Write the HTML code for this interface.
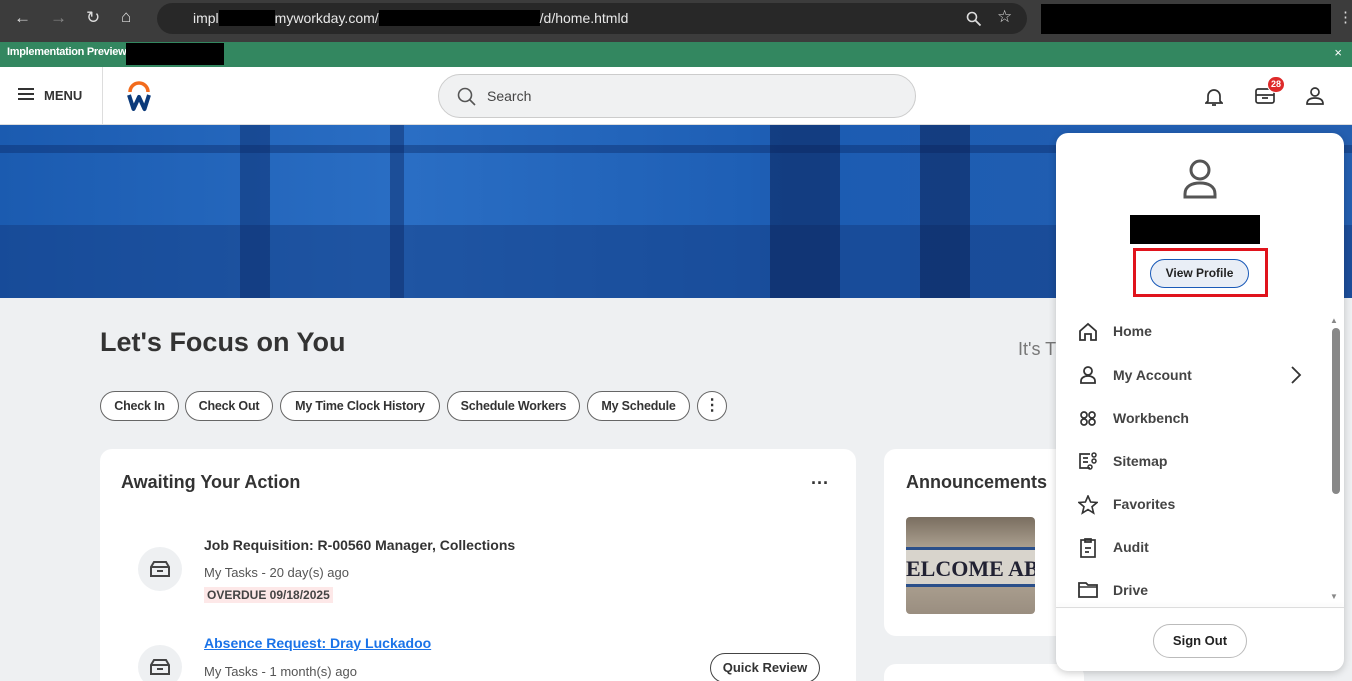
<!DOCTYPE html>
<html><head><style>
*{box-sizing:border-box;margin:0;padding:0}
html,body{width:1352px;height:681px;overflow:hidden}
body{background:#eef0f2;font-family:"Liberation Sans",sans-serif;position:relative;color:#333}
.abs{position:absolute}
.chrome{left:0;top:0;width:1352px;height:38px;background:#3c3c3c}
.url{left:157px;top:3px;width:870px;height:31px;border-radius:16px;background:#282828;color:#e8e8e8;font-size:14px;line-height:31px;padding-left:36px}
.green{left:0;top:38px;width:1352px;height:29px;background:#338760;border-top:4px solid #3c3c3c}
.hdr{left:0;top:67px;width:1352px;height:58px;background:#fff;border-bottom:1px solid #ddd}
.banner{left:0;top:125px;width:1352px;height:173px;background:linear-gradient(90deg,#1b5bb0,#2a6ec4 30%,#1c5cb2 60%,#245fb0);overflow:hidden}
.pill{position:absolute;top:391px;height:30px;border:1px solid #666;border-radius:15px;background:#fff;font-size:12.5px;font-weight:bold;line-height:28px;text-align:center;color:#333;white-space:nowrap;letter-spacing:-.2px}
.card{background:#fff;border-radius:12px;position:absolute}
.menu div.it{position:absolute;left:57px;font-size:14px;font-weight:bold;color:#444}
.menu svg{position:absolute;left:22px}
</style></head><body>
<div class="abs chrome">
<span class="abs" style="left:14px;top:8px;color:#ddd;font-size:17px">←</span>
<span class="abs" style="left:50px;top:8px;color:#888;font-size:17px">→</span>
<span class="abs" style="left:86px;top:8px;color:#ddd;font-size:17px">↻</span>
<span class="abs" style="left:121px;top:7px;color:#ddd;font-size:17px">⌂</span>
<div class="abs url">impl<span style="background:#000;color:#000">xxxxxxxx</span>myworkday.com/<span style="background:#000;color:#000">xxxxxxxxxxxxxxxxxxxxxxx</span>/d/home.htmld</div>
<svg class="abs" style="left:966px;top:11px" width="16" height="16"><circle cx="6" cy="6" r="4.5" stroke="#ddd" stroke-width="1.6" fill="none"/><path d="M9.5 9.5l5 5" stroke="#ddd" stroke-width="1.8"/></svg>
<span class="abs" style="left:997px;top:7px;color:#ddd;font-size:17px">☆</span>
<div class="abs" style="left:1041px;top:4px;width:290px;height:30px;background:#000"></div>
<span class="abs" style="left:1338px;top:8px;color:#ddd;font-size:15px">⋮</span>
</div>
<div class="abs green"><span class="abs" style="left:7px;top:4px;color:#fff;font-size:11px;font-weight:bold;letter-spacing:-.3px">Implementation Preview</span><div class="abs" style="left:126px;top:1px;width:98px;height:22px;background:#000"></div><span class="abs" style="right:10px;top:3px;color:#fff;font-size:13px">×</span></div>
<div class="abs hdr">
<div class="abs" style="left:18px;top:21px;width:16px;height:2px;background:#333;box-shadow:0 5px #333,0 10px #333"></div>
<span class="abs" style="left:44px;top:21px;font-size:13px;font-weight:bold;color:#333">MENU</span>
<div class="abs" style="left:102px;top:0;width:1px;height:58px;background:#ddd"></div>
<svg class="abs" style="left:126px;top:14px" width="26" height="32"><path d="M4 11 A9 9 0 0 1 22 11" stroke="#f26b1d" stroke-width="3.5" fill="none"/><path d="M3 14l4.5 14 5.5-12 5.5 12 4.5-14" stroke="#0b3a7a" stroke-width="4" fill="none" stroke-linejoin="round"/></svg>
<div class="abs" style="left:438px;top:7px;width:478px;height:44px;border-radius:22px;background:#f0f1f2;border:1px solid #ccc"><svg class="abs" style="left:18px;top:12px" width="20" height="20"><circle cx="8" cy="8" r="6.5" stroke="#555" stroke-width="1.6" fill="none"/><path d="M13 13l5 5" stroke="#555" stroke-width="1.6"/></svg><span class="abs" style="left:48px;top:13px;font-size:14px;color:#444">Search</span></div>
<svg class="abs" style="left:1205px;top:20px" width="18" height="20"><path d="M3 14V9a6 6 0 0 1 12 0v5l2 2H1z M7 18h4" stroke="#333" stroke-width="1.7" fill="none"/></svg>
<svg class="abs" style="left:1255px;top:21px" width="20" height="16"><rect x="1" y="1" width="18" height="14" rx="2" stroke="#333" stroke-width="1.7" fill="none"/><path d="M1 7h18M7 10h6" stroke="#333" stroke-width="1.7"/></svg>
<div class="abs" style="left:1267px;top:9px;width:18px;height:17px;border-radius:9px;background:#de2a2a;color:#fff;font-size:9px;font-weight:bold;text-align:center;line-height:15px;border:1px solid #fff">28</div>
<svg class="abs" style="left:1306px;top:20px" width="18" height="18"><circle cx="9" cy="5" r="4" stroke="#333" stroke-width="1.7" fill="none"/><path d="M1 17c0-5 4-6 8-6s8 1 8 6z" stroke="#333" stroke-width="1.7" fill="none"/></svg>
</div>
<div class="abs banner">
<div class="abs" style="left:0;top:100px;width:1352px;height:73px;background:rgba(20,60,130,.5)"></div>
<div class="abs" style="left:240px;top:0;width:30px;height:173px;background:rgba(10,40,100,.45)"></div>
<div class="abs" style="left:390px;top:0;width:14px;height:173px;background:rgba(10,40,100,.45)"></div>
<div class="abs" style="left:0;top:20px;width:1352px;height:8px;background:rgba(10,40,100,.4)"></div>
<div class="abs" style="left:770px;top:0;width:70px;height:173px;background:rgba(10,30,80,.5)"></div>
<div class="abs" style="left:920px;top:0;width:50px;height:173px;background:rgba(10,30,80,.5)"></div>
</div>
<div class="abs" style="left:100px;top:327px;font-size:27px;font-weight:bold;color:#333">Let's Focus on You</div>
<div class="abs" style="left:1018px;top:339px;font-size:18px;color:#777">It's T</div>
<div class="pill" style="left:100px;width:79px">Check In</div>
<div class="pill" style="left:185px;width:88px">Check Out</div>
<div class="pill" style="left:280px;width:160px">My Time Clock History</div>
<div class="pill" style="left:447px;width:133px">Schedule Workers</div>
<div class="pill" style="left:587px;width:103px">My Schedule</div>
<div class="pill" style="left:697px;width:30px;font-size:16px">⋮</div>
<div class="card" style="left:100px;top:449px;width:756px;height:260px">
<div class="abs" style="left:21px;top:23px;font-size:18px;font-weight:bold;color:#333">Awaiting Your Action</div>
<div class="abs" style="left:711px;top:24px;font-size:18px;font-weight:bold;color:#333">···</div>
<div class="abs" style="left:38px;top:98px;width:44px;height:44px;border-radius:22px;background:#eef0f2"></div>
<svg class="abs" style="left:49px;top:111px" width="22" height="18"><path d="M2 7l3-5h12l3 5v9H2z M2 7h18 M8 11h6" stroke="#444" stroke-width="2" fill="none"/></svg>
<div class="abs" style="left:104px;top:88px;font-size:14px;font-weight:bold;color:#333">Job Requisition: R-00560 Manager, Collections</div>
<div class="abs" style="left:104px;top:116px;font-size:13px;color:#555">My Tasks - 20 day(s) ago</div>
<div class="abs" style="left:104px;top:138px;font-size:12px;font-weight:bold;color:#444;background:#fde8e8;padding:1px 3px">OVERDUE 09/18/2025</div>
<div class="abs" style="left:38px;top:196px;width:44px;height:44px;border-radius:22px;background:#eef0f2"></div>
<svg class="abs" style="left:49px;top:209px" width="22" height="18"><path d="M2 7l3-5h12l3 5v9H2z M2 7h18 M8 11h6" stroke="#444" stroke-width="2" fill="none"/></svg>
<div class="abs" style="left:104px;top:186px;font-size:14px;font-weight:bold;color:#1a73e8;text-decoration:underline">Absence Request: Dray Luckadoo</div>
<div class="abs" style="left:104px;top:215px;font-size:13px;color:#555">My Tasks - 1 month(s) ago</div>
<div class="abs" style="left:610px;top:204px;width:110px;height:30px;border:1px solid #444;border-radius:15px;font-size:13px;font-weight:bold;text-align:center;line-height:28px">Quick Review</div>
</div>
<div class="card" style="left:884px;top:449px;width:200px;height:187px">
<div class="abs" style="left:22px;top:23px;font-size:18px;font-weight:bold;color:#333">Announcements</div>
<div class="abs" style="left:22px;top:68px;width:129px;height:97px;border-radius:4px;background:linear-gradient(#7a6e60,#b8ad9c 40%,#9a8e80);overflow:hidden"><div style="margin-top:30px;background:#d8d4cc;height:40px;border-top:3px solid #2a4f8a;border-bottom:3px solid #2a4f8a;font:bold 22px 'Liberation Serif',serif;color:#223;white-space:nowrap;line-height:38px">ELCOME ABOAR</div></div>
</div>
<div class="card" style="left:884px;top:664px;width:200px;height:30px"></div>
<div class="card menu" style="left:1056px;top:133px;width:288px;height:538px;box-shadow:0 2px 8px rgba(0,0,0,.2)">
<svg class="abs" style="left:127px;top:26px" width="34" height="40"><circle cx="17" cy="11" r="9" stroke="#555" stroke-width="3" fill="none"/><path d="M2 38v-3c0-8 7-11 15-11s15 3 15 11v3z" stroke="#555" stroke-width="3" fill="none"/></svg>
<div class="abs" style="left:74px;top:82px;width:130px;height:29px;background:#000"></div>
<div class="abs" style="left:77px;top:115px;width:135px;height:49px;border:3px solid #e0131c"></div>
<div class="abs" style="left:94px;top:126px;width:99px;height:29px;border:1px solid #1a5ab8;border-radius:15px;background:#e9eef6;font-size:12px;font-weight:bold;text-align:center;line-height:27px;color:#222">View Profile</div>
<svg style="top:189px" width="20" height="20"><path d="M2 9L10 2l8 7v9h-5v-6H7v6H2z" stroke="#333" stroke-width="1.8" fill="none"/></svg><div class="it" style="top:190px">Home</div>
<svg style="top:232px" width="20" height="20"><circle cx="10" cy="6" r="4" stroke="#333" stroke-width="1.8" fill="none"/><path d="M3 18v-2c0-3 3-5 7-5s7 2 7 5v2z" stroke="#333" stroke-width="1.8" fill="none"/></svg><div class="it" style="top:234px">My Account</div>
<svg class="abs" style="left:234px;top:233px" width="12" height="18"><path d="M2 1l8 8-8 8" stroke="#333" stroke-width="1.8" fill="none"/></svg>
<svg style="top:276px" width="20" height="20"><circle cx="6" cy="6" r="3" stroke="#333" stroke-width="1.7" fill="none"/><circle cx="14" cy="6" r="3" stroke="#333" stroke-width="1.7" fill="none"/><circle cx="6" cy="13" r="3" stroke="#333" stroke-width="1.7" fill="none"/><circle cx="14" cy="13" r="3" stroke="#333" stroke-width="1.7" fill="none"/></svg><div class="it" style="top:277px">Workbench</div>
<svg style="top:318px" width="20" height="20"><path d="M12 3H2v14h10M5 7h5M5 11h5" stroke="#333" stroke-width="1.7" fill="none"/><circle cx="16" cy="4" r="2" stroke="#333" stroke-width="1.5" fill="none"/><circle cx="16" cy="10" r="2" stroke="#333" stroke-width="1.5" fill="none"/><circle cx="12" cy="16" r="2" stroke="#333" stroke-width="1.5" fill="none"/></svg><div class="it" style="top:320px">Sitemap</div>
<svg style="top:362px" width="20" height="20"><path d="M10 1l2.6 6 6.4.5-5 4.2 1.6 6.3L10 14.6 4.4 18 6 11.7 1 7.5 7.4 7z" stroke="#333" stroke-width="1.6" fill="none"/></svg><div class="it" style="top:363px">Favorites</div>
<svg style="top:404px" width="20" height="22"><rect x="3" y="3" width="14" height="17" stroke="#333" stroke-width="1.7" fill="none"/><path d="M7 2h6v3H7zM7 11h6M7 15h4" stroke="#333" stroke-width="1.7" fill="none"/></svg><div class="it" style="top:406px">Audit</div>
<svg style="top:448px" width="20" height="18"><path d="M1 2h7l2 2h9v12H1z" stroke="#333" stroke-width="1.8" fill="none"/><path d="M1 6h18" stroke="#333" stroke-width="1.5"/></svg><div class="it" style="top:449px">Drive</div>
<div class="abs" style="left:274px;top:183px;font-size:8px;color:#888">▲</div>
<div class="abs" style="left:276px;top:195px;width:8px;height:166px;border-radius:4px;background:#888"></div>
<div class="abs" style="left:274px;top:459px;font-size:8px;color:#888">▼</div>
<div class="abs" style="left:0;top:474px;width:288px;height:1px;background:#ddd;box-shadow:0 -2px 4px rgba(0,0,0,.08)"></div>
<div class="abs" style="left:97px;top:491px;width:94px;height:34px;border:1px solid #bbb;border-radius:17px;font-size:13px;font-weight:bold;text-align:center;line-height:32px;color:#222">Sign Out</div>
</div>
</body></html>
